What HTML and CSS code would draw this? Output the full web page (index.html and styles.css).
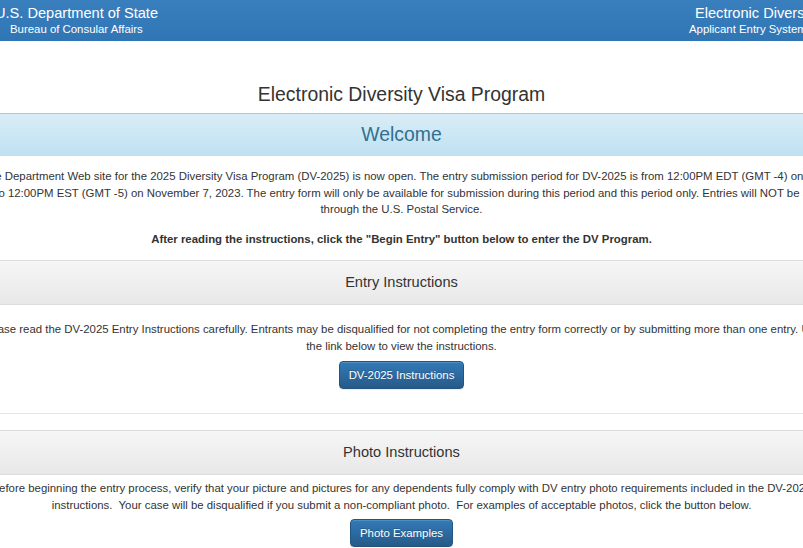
FILE: index.html
```html
<!DOCTYPE html>
<html lang="en">
<head>
<meta charset="utf-8">
<title>Electronic Diversity Visa Program</title>
<link rel="stylesheet" href="styles.css">
</head>
<body>
<div class="page">
  <header class="topbar">
    <div class="brand">
      <div class="brand-title">U.S. Department of State</div>
      <div class="brand-sub">Bureau of Consular Affairs</div>
    </div>
    <div class="app">
      <div class="app-title">Electronic Diversity Visa Program</div>
      <div class="app-sub">Applicant Entry System</div>
    </div>
  </header>

  <h1 class="title">Electronic Diversity Visa Program</h1>
  <div class="welcome">Welcome</div>

  <p class="intro">The Department Web site for the 2025 Diversity Visa Program (DV-2025) is now open. The entry submission period for DV-2025 is from 12:00PM EDT (GMT -4) on October<br>4, 2023 to 12:00PM EST (GMT -5) on November 7, 2023. The entry form will only be available for submission during this period and this period only. Entries will NOT be accepted<br>through the U.S. Postal Service.</p>

  <p class="cta">After reading the instructions, click the "Begin Entry" button below to enter the DV Program.</p>

  <section class="panel">
    <div class="panel-heading">Entry Instructions</div>
    <div class="panel-body entry">
      <p class="panel-text">Please read the DV-2025 Entry Instructions carefully. Entrants may be disqualified for not completing the entry form correctly or by submitting more than one entry. Use<br>the link below to view the instructions.</p>
      <a class="btn" href="#">DV-2025 Instructions</a>
    </div>
  </section>

  <hr class="divider">

  <section class="panel">
    <div class="panel-heading">Photo Instructions</div>
    <div class="panel-body photo">
      <p class="panel-text">Before beginning the entry process, verify that your picture and pictures for any dependents fully comply with DV entry photo requirements included in the DV-2025<br>instructions.&nbsp; Your case will be disqualified if you submit a non-compliant photo.&nbsp; For examples of acceptable photos, click the button below.</p>
      <a class="btn" href="#">Photo Examples</a>
    </div>
  </section>
</div>
</body>
</html>
```

FILE: styles.css
```css
html, body {
  margin: 0;
  padding: 0;
  background: #fff;
  overflow: hidden;
}

body {
  font-family: "Liberation Sans", Arial, sans-serif;
  color: #333;
  font-size: 11.4px;
  line-height: 16.5px;
}

.page {
  width: 1003px;
  margin-left: -100px;
}

/* Top bar */
.topbar {
  display: flex;
  height: 41px;
  padding-left: 95px;
  background: linear-gradient(#3a7fbd, #3176b4);
  color: #fff;
  white-space: nowrap;
}

.brand {
  flex: 0 0 694px;
  padding-top: 5px;
}

.brand-title {
  font-size: 14.6px;
  line-height: 17px;
}

.brand-sub {
  font-size: 11.4px;
  line-height: 15px;
  margin-left: 15px;
}

.app {
  padding-top: 5px;
}

.app-title {
  font-size: 14.6px;
  line-height: 17px;
  margin-left: 6px;
}

.app-sub {
  font-size: 11.4px;
  line-height: 15px;
}

/* Title */
.title {
  margin: 42px 0 8px;
  font-size: 19.4px;
  line-height: 22px;
  font-weight: normal;
  text-align: center;
  color: #333;
}

.welcome {
  border-top: 1px solid #9acfea;
  padding: 9px 0 11px;
  font-size: 19.4px;
  line-height: 22px;
  text-align: center;
  color: #31708f;
  background: linear-gradient(#d9edf7, #bfe1f2);
}

.intro {
  margin: 12px 0 0;
  text-align: center;
  text-indent: 26px;
}

.cta {
  margin: 13px 0 0;
  text-align: center;
  font-weight: bold;
}

/* Panels */
.panel {
  margin-top: 13px;
}

.panel-heading {
  border-top: 1px solid #dcdcdc;
  border-bottom: 1px solid #dcdcdc;
  padding: 11px 0 12px;
  font-size: 14.6px;
  line-height: 20px;
  text-align: center;
  color: #333;
  background: linear-gradient(#f6f6f6, #e8e8e8);
}

.panel-body {
  display: flex;
  flex-direction: column;
  align-items: center;
}

.panel-body.entry {
  padding-top: 16px;
}

.panel-body.photo {
  padding-top: 5px;
}

.panel-text {
  margin: 0;
  text-align: center;
}

.entry .btn {
  margin-top: 7px;
}

.photo .btn {
  margin-top: 6px;
}

.btn {
  display: inline-block;
  padding: 5px 9px;
  border: 1px solid #245580;
  border-radius: 4px;
  font-size: 11.4px;
  line-height: 16px;
  color: #fff;
  text-decoration: none;
  text-shadow: 0 -1px 0 rgba(0, 0, 0, 0.2);
  background: linear-gradient(#337ab7, #265a88);
  box-shadow: inset 0 1px 0 rgba(255, 255, 255, 0.15), 0 1px 1px rgba(0, 0, 0, 0.075);
}

.divider {
  margin: 24px 0 0;
  border: 0;
  border-top: 1px solid #e6e6e6;
  height: 0;
}

.divider + .panel {
  margin-top: 16px;
}
```
